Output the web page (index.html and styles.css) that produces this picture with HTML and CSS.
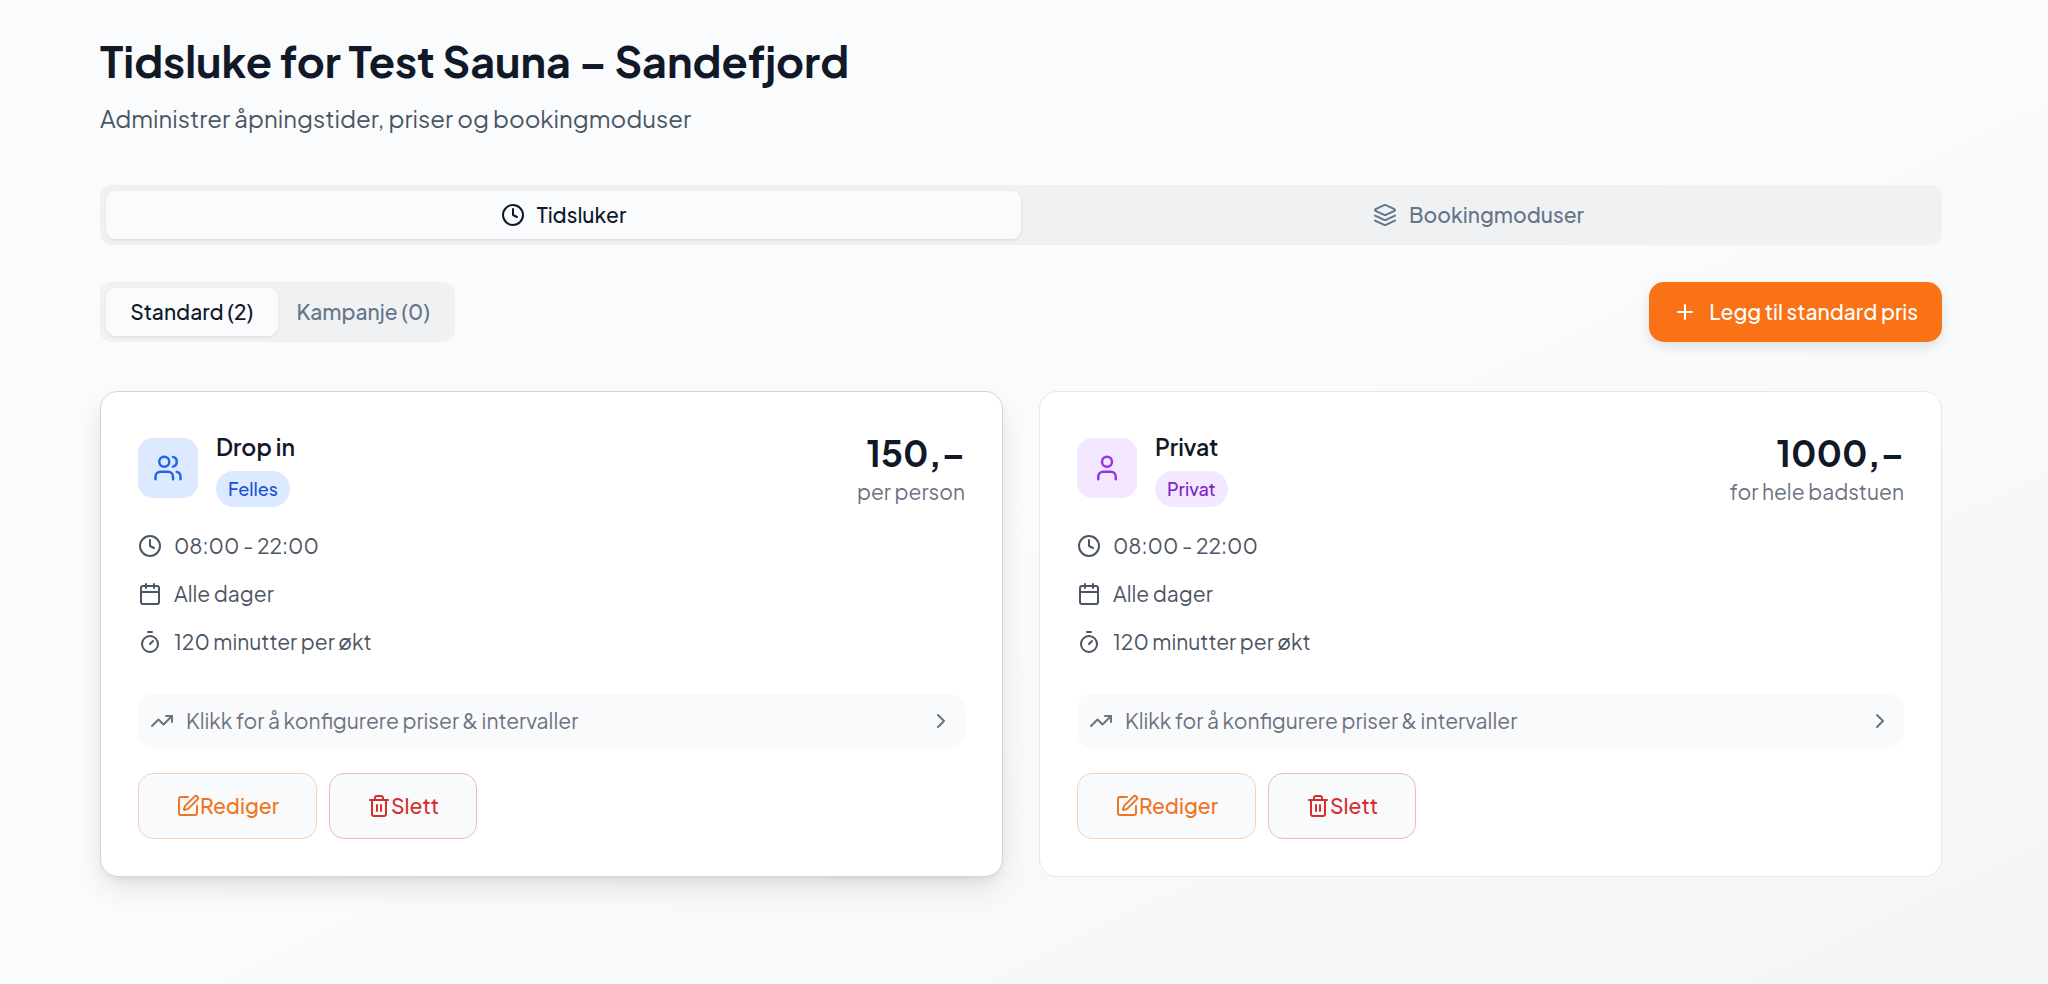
FILE: index.html
```html
<!DOCTYPE html>
<html lang="nb">
<head>
	<meta charset="utf-8">
	<meta name="viewport" content="width=device-width, initial-scale=1">
	<title>Tidsluker</title>
	<link rel="stylesheet" href="styles.css">
</head>
<body>
	<!-- icons -->
	<svg class="sprite" aria-hidden="true">
		<symbol id="clock" viewBox="0 0 24 24"><circle cx="12" cy="12" r="10"/><path d="M12 6v6l4 2"/></symbol>
		<symbol id="layers" viewBox="0 0 24 24"><path d="m12.83 2.18a2 2 0 0 0-1.66 0L2.6 6.08a1 1 0 0 0 0 1.83l8.58 3.91a2 2 0 0 0 1.66 0l8.58-3.9a1 1 0 0 0 0-1.83Z"/><path d="m22 12.65-9.17 4.16a2 2 0 0 1-1.66 0L2 12.65"/><path d="m22 17.65-9.17 4.16a2 2 0 0 1-1.66 0L2 17.65"/></symbol>
		<symbol id="plus" viewBox="0 0 24 24"><path d="M5 12h14M12 5v14"/></symbol>
		<symbol id="users" viewBox="0 0 24 24"><path d="M16 21v-2a4 4 0 0 0-4-4H6a4 4 0 0 0-4 4v2"/><circle cx="9" cy="7" r="4"/><path d="M22 21v-2a4 4 0 0 0-3-3.87M16 3.13a4 4 0 0 1 0 7.75"/></symbol>
		<symbol id="user" viewBox="0 0 24 24"><path d="M19 21v-2a4 4 0 0 0-4-4H9a4 4 0 0 0-4 4v2"/><circle cx="12" cy="7" r="4"/></symbol>
		<symbol id="calendar" viewBox="0 0 24 24"><path d="M8 2v4M16 2v4M3 10h18"/><rect x="3" y="4" width="18" height="18" rx="2"/></symbol>
		<symbol id="timer" viewBox="0 0 24 24"><path d="M10 2h4M12 14l3-3"/><circle cx="12" cy="14" r="8"/></symbol>
		<symbol id="trend" viewBox="0 0 24 24"><path d="M22 7l-8.5 8.5-5-5L2 17"/><path d="M16 7h6v6"/></symbol>
		<symbol id="chevron" viewBox="0 0 24 24"><path d="m9 18 6-6-6-6"/></symbol>
		<symbol id="edit" viewBox="0 0 24 24"><path d="M12 3H5a2 2 0 0 0-2 2v14a2 2 0 0 0 2 2h14a2 2 0 0 0 2-2v-7"/><path d="M18.375 2.625a1 1 0 0 1 3 3l-9.013 9.014a2 2 0 0 1-.853.505l-2.873.84a.5.5 0 0 1-.62-.62l.84-2.873a2 2 0 0 1 .506-.852z"/></symbol>
		<symbol id="trash" viewBox="0 0 24 24"><path d="M3 6h18M19 6v14a2 2 0 0 1-2 2H7a2 2 0 0 1-2-2V6M8 6V4a2 2 0 0 1 2-2h4a2 2 0 0 1 2 2v2M10 11v6M14 11v6"/></symbol>
	</svg>

	<main class="page">
		<header class="header">
			<h1>Tidsluke for Test Sauna – Sandefjord</h1>
			<p>Administrer åpningstider, priser og bookingmoduser</p>
		</header>

		<div class="tabs main-tabs" role="tablist">
			<button type="button" class="tab active" role="tab" aria-selected="true"><svg class="icon"><use href="#clock"/></svg>Tidsluker</button>
			<button type="button" class="tab" role="tab" aria-selected="false"><svg class="icon"><use href="#layers"/></svg>Bookingmoduser</button>
		</div>

		<div class="toolbar">
			<div class="tabs" role="tablist">
				<button type="button" class="tab active" role="tab" aria-selected="true">Standard (2)</button>
				<button type="button" class="tab" role="tab" aria-selected="false">Kampanje (0)</button>
			</div>
			<button type="button" class="add"><svg class="icon"><use href="#plus"/></svg>Legg til standard pris</button>
		</div>

		<div class="cards">
			<article class="card raised">
				<div class="card-top">
					<div class="tile shared"><svg class="icon tile-icon"><use href="#users"/></svg></div>
					<div class="name">
						<h2>Drop in</h2>
						<span class="badge shared">Felles</span>
					</div>
					<div class="price">
						<strong>150,–</strong>
						<span>per person</span>
					</div>
				</div>
				<ul class="details">
					<li><svg class="icon"><use href="#clock"/></svg>08:00 - 22:00</li>
					<li><svg class="icon"><use href="#calendar"/></svg>Alle dager</li>
					<li><svg class="icon"><use href="#timer"/></svg>120 minutter per økt</li>
				</ul>
				<button type="button" class="configure">
					<svg class="icon"><use href="#trend"/></svg>
					<span>Klikk for å konfigurere priser &amp; intervaller</span>
					<svg class="icon"><use href="#chevron"/></svg>
				</button>
				<div class="actions">
					<button type="button" class="action edit"><svg class="icon"><use href="#edit"/></svg>Rediger</button>
					<button type="button" class="action delete"><svg class="icon"><use href="#trash"/></svg>Slett</button>
				</div>
			</article>

			<article class="card">
				<div class="card-top">
					<div class="tile private"><svg class="icon tile-icon"><use href="#user"/></svg></div>
					<div class="name">
						<h2>Privat</h2>
						<span class="badge private">Privat</span>
					</div>
					<div class="price">
						<strong>1000,–</strong>
						<span>for hele badstuen</span>
					</div>
				</div>
				<ul class="details">
					<li><svg class="icon"><use href="#clock"/></svg>08:00 - 22:00</li>
					<li><svg class="icon"><use href="#calendar"/></svg>Alle dager</li>
					<li><svg class="icon"><use href="#timer"/></svg>120 minutter per økt</li>
				</ul>
				<button type="button" class="configure">
					<svg class="icon"><use href="#trend"/></svg>
					<span>Klikk for å konfigurere priser &amp; intervaller</span>
					<svg class="icon"><use href="#chevron"/></svg>
				</button>
				<div class="actions">
					<button type="button" class="action edit"><svg class="icon"><use href="#edit"/></svg>Rediger</button>
					<button type="button" class="action delete"><svg class="icon"><use href="#trash"/></svg>Slett</button>
				</div>
			</article>
		</div>
	</main>
</body>
</html>
```
FILE: styles.css
```css
* {
    box-sizing: border-box;
    margin: 0;
    padding: 0;
}

body {
    min-height: 100vh;
    background: linear-gradient(to bottom right, #f9fbfd 50%, #f4f5f7);
    color: #111827;
    font-family: "Plus Jakarta Sans", Inter, sans-serif;
    font-size: 21px;
    line-height: 30px;
}

button {
    border: 0;
    background: none;
    color: inherit;
    font: inherit;
    cursor: pointer;
}

.sprite {
    display: none;
}

.icon {
    flex: none;
    width: 24px;
    height: 24px;
    fill: none;
    stroke: currentColor;
    stroke-width: 2;
    stroke-linecap: round;
    stroke-linejoin: round;
}

.page {
    padding: 31px 106px 48px 100px;
}

.header {
    margin-bottom: 49px;
}

.header h1 {
    font-size: 43px;
    font-weight: 700;
    line-height: 60px;
}

.header p {
    margin-top: 9px;
    color: #4b5563;
    font-size: 24px;
    line-height: 36px;
}

/* tabs */
.tabs {
    display: grid;
    grid-template-columns: 1fr 1fr;
    padding: 6px;
    border-radius: 12px;
    background: #f0f1f3;
    color: #64748b;
}

.tab {
    display: flex;
    align-items: center;
    justify-content: center;
    gap: 12px;
    height: 48px;
    padding: 0 19px;
    border-radius: 9px;
    font-weight: 500;
}

.tab.active {
    background: #f9fbfd;
    color: #0f172a;
    box-shadow: 0 1px 3px rgba(0, 0, 0, 0.1);
}

.toolbar {
    display: flex;
    align-items: center;
    justify-content: space-between;
    margin: 37px 0 49px;
}

.add {
    display: flex;
    align-items: center;
    gap: 12px;
    height: 60px;
    padding: 0 24px;
    border-radius: 15px;
    background: #f97316;
    color: #fff;
    font-weight: 500;
    box-shadow: 0 5px 12px rgba(0, 0, 0, 0.1);
}

/* cards */
.cards {
    display: grid;
    grid-template-columns: 1fr 1fr;
    gap: 36px;
}

.card {
    padding: 37px;
    border: 1px solid #e5e7eb;
    border-radius: 18px;
    background: #fff;
}

.card.raised {
    border-color: #d1d5db;
    box-shadow: 0 12px 30px -4px rgba(0, 0, 0, 0.12), 0 4px 8px -4px rgba(0, 0, 0, 0.1);
}

.card-top {
    display: flex;
    align-items: center;
    gap: 18px;
}

.tile {
    display: flex;
    align-items: center;
    justify-content: center;
    width: 60px;
    height: 60px;
    border-radius: 15px;
}

.tile-icon {
    width: 30px;
    height: 30px;
}

.shared {
    background: #dbeafe;
    color: #1d4ed8;
}

.private {
    background: #f3e8ff;
    color: #7e22ce;
}

.tile.shared {
    color: #2563eb;
}

.tile.private {
    color: #9333ea;
}

.name h2 {
    margin-bottom: 6px;
    font-size: 23px;
    font-weight: 600;
    line-height: 36px;
}

.badge {
    display: block;
    width: fit-content;
    padding: 3px 12px;
    border-radius: 18px;
    font-size: 18px;
    font-weight: 500;
}

.price {
    display: flex;
    flex-direction: column;
    margin-left: auto;
    text-align: right;
}

.price strong {
    font-size: 36px;
    font-weight: 700;
    line-height: 48px;
}

.price span {
    color: #6b7280;
}

.details {
    display: grid;
    gap: 18px;
    margin: 24px 0 37px;
    color: #4b5563;
    list-style: none;
}

.details li {
    display: flex;
    align-items: center;
    gap: 12px;
}

.configure {
    display: flex;
    align-items: center;
    gap: 12px;
    width: 100%;
    padding: 12px;
    border-radius: 15px;
    background: #f9fafc;
    color: #6b7280;
    text-align: left;
}

.configure span {
    flex: 1;
}

.actions {
    display: flex;
    gap: 12px;
    margin-top: 25px;
}

.action {
    display: flex;
    align-items: center;
    height: 66px;
    padding: 0 37px;
    border: 1px solid;
    border-radius: 15px;
    background: #f9fafc;
    font-weight: 500;
}

.action.edit {
    border-color: #fbd0b0;
    color: #ee7623;
}

.action.delete {
    border-color: #f0b8bc;
    color: #d32f2f;
}
```
